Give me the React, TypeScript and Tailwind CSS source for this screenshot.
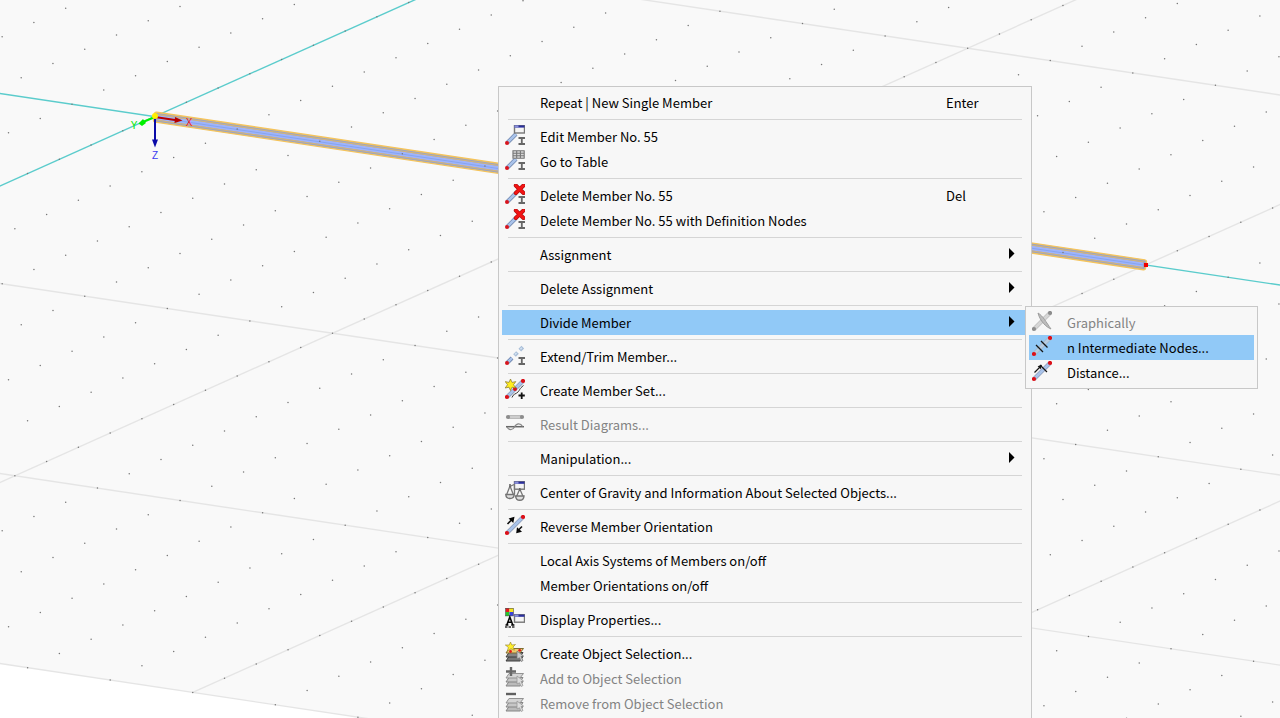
import type { ReactNode } from "react";
import clsx from "clsx";

/* ---------- icons (20px wide, drawn in a 23px tall box) ---------- */

function Icon({ children }: { children?: ReactNode }) {
  return (
    <svg viewBox="0 0 20 23" className="h-[23px] w-5 shrink-0" fill="none" aria-hidden="true">
      {children}
    </svg>
  );
}

function ShortRod() {
  return (
    <>
      <path d="M2 18 L11 9" stroke="#6f86ae" strokeWidth="4" />
      <path d="M2 18 L11 9" stroke="#a9c3ea" strokeWidth="2.6" />
      <circle cx="2" cy="18" r="2" fill="#d8141c" />
    </>
  );
}

function LongRod({ color = "#a9c3ea", edge = "#8b9cb8", node = "#dc1018" }) {
  return (
    <>
      <path d="M2 18 L18 2" stroke={edge} strokeWidth="4" />
      <path d="M2 18 L18 2" stroke={color} strokeWidth="2.6" />
      <circle cx="2" cy="18" r="2.1" fill={node} />
      <circle cx="18" cy="2" r="2.1" fill={node} />
    </>
  );
}

function Section() {
  return <path d="M13.5 13 H20 M13.5 19 H20 M16.8 13 V19" stroke="#666" strokeWidth="1.8" />;
}

function Dialog({ x = 9.5, y = 0.5 }) {
  return (
    <g>
      <rect x={x} y={y} width="10" height="7.5" fill="#f4f4f4" stroke="#777" strokeWidth="1.4" />
      <path d={`M${x} ${y + 1} h10`} stroke="#2a2f9c" strokeWidth="2.2" />
      <path d={`M${x} ${y + 1} h4`} stroke="#8a90d8" strokeWidth="2.2" />
    </g>
  );
}

const EditIcon = () => (
  <Icon>
    <ShortRod />
    <Dialog />
    <Section />
  </Icon>
);

const TableIcon = () => (
  <Icon>
    <ShortRod />
    <rect x="7.5" y="0.5" width="12" height="8" fill="#d8d8d8" />
    <path d="M7.5 .8 H19.5 M7.5 3.3 H19.5 M7.5 5.8 H19.5 M7.5 8.3 H19.5 M8 .5 V8.5 M11.7 .5 V8.5 M15.4 .5 V8.5 M19.2 .5 V8.5" stroke="#777" strokeWidth="1.1" />
    <Section />
  </Icon>
);

const DeleteIcon = () => (
  <Icon>
    <ShortRod />
    <path d="M10.8 1.5 L18.5 9 M18.5 1.5 L10.8 9" stroke="#a80d0d" strokeWidth="4" strokeLinecap="round" />
    <path d="M10.8 1.5 L18.5 9 M18.5 1.5 L10.8 9" stroke="#f31414" strokeWidth="2.8" strokeLinecap="round" />
    <Section />
  </Icon>
);

const ExtendIcon = () => (
  <Icon>
    <path d="M2 18 L7 13" stroke="#6f86ae" strokeWidth="4" />
    <path d="M2 18 L7 13" stroke="#a9c3ea" strokeWidth="2.4" />
    <path d="M9.5 10.5 L12.5 7.5 M14.8 5.2 L17.8 2.2" stroke="#aabfd8" strokeWidth="3.8" />
    <path d="M10 9.5 L11.5 8 M15.4 4.2 L16.9 2.7" stroke="#d3e2f3" strokeWidth="1.6" />
    <circle cx="2" cy="18" r="2" fill="#d8141c" />
    <Section />
  </Icon>
);

const MemberSetIcon = () => (
  <Icon>
    <LongRod />
    <circle cx="10" cy="10" r="2" fill="#dc1018" />
    <path d="M18.5 6.5 C14 10 15 11 13 13 C11 15 8 15 7 18.5" stroke="#333" />
    <path d="M5.5 0 L7 3.4 L10.8 2.6 L8.5 5.7 L10.8 9 L7 8.2 L5.5 11.5 L4 8.2 L.2 9 L2.5 5.7 L.2 2.6 L4 3.4 Z" fill="#ffed1e" stroke="#85762b" strokeWidth=".7" />
    <path d="M13.5 16.5 H19.8 M16.7 13.5 V20" stroke="#111" strokeWidth="1.8" />
  </Icon>
);

const ResultIcon = () => (
  <Icon>
    <path d="M3 4 H17" stroke="#aaa" strokeWidth="3.6" />
    <path d="M3 4 H17" stroke="#d2d2d2" strokeWidth="1.8" />
    <circle cx="3" cy="4" r="2.1" fill="#8d8d8d" />
    <circle cx="17" cy="4" r="2.1" fill="#8d8d8d" />
    <path d="M1 13.7 H19" stroke="#666" strokeWidth="1.5" />
    <path d="M2 14 C4 17.5 7.5 17.5 9.5 14 C11.5 10 15.5 9.8 17.5 13.5" stroke="#888" strokeWidth="1.3" />
  </Icon>
);

const GravityIcon = () => (
  <Icon>
    <path d="M5 5.5 L9 3.5 M9.5 3.5 V13.5 M5 5 L1.5 14 M5 5 L8.5 14 M14.8 8 L11.3 16 M14.8 8 L18.3 16" stroke="#777" strokeWidth="1.3" />
    <path d="M.8 13.5 H9.2 C9 17 7 17.5 5 17.5 S1 17 .8 13.5 Z M10.6 15 H19 C18.8 18.5 16.8 19.3 14.8 19.3 S10.8 18.5 10.6 15 Z" fill="#ddd" stroke="#737373" strokeWidth="1.4" />
    <Dialog x={9.5} y={0.7} />
    <path d="M5 3 V6 M14.8 7 V10" stroke="#666" strokeWidth="1.6" />
  </Icon>
);

const ReverseIcon = () => (
  <Icon>
    <LongRod />
    <path d="M2.5 9 L7 4.5 M17 11.5 L13 15.5" stroke="#111" strokeWidth="1.6" />
    <path d="M9.5 1.8 L8.3 8 L3.6 3.4 Z M11.2 18.2 L12 12.2 L17 16.8 Z" fill="#050505" />
  </Icon>
);

const DisplayIcon = () => (
  <Icon>
    <rect x="0.5" width="4" height="4" fill="#e51a1a" />
    <rect x="4.5" width="4" height="4" fill="#f5e51b" />
    <rect x="0.5" y="4" width="4" height="4" fill="#28c62a" />
    <rect x="4.5" y="4" width="4" height="4" fill="#3b43d9" />
    <rect x="0.5" y="0.3" width="8" height="7.6" stroke="#555" strokeWidth=".6" />
    <path d="M1.8 17 L4.8 9 L7.8 17 M2.8 14.3 H6.8 M.5 17 H3.4 M6.2 17 H9.4" stroke="#050505" strokeWidth="1.6" />
    <path d="M0 19 H10" stroke="#333" strokeWidth="1.6" strokeDasharray="2.5 1" />
    <Dialog x={9.5} y={6.7} />
  </Icon>
);

function Layers({ dim }: { dim?: boolean }) {
  const line = dim ? "#858585" : "#3d3d3d";
  return (
    <>
      <path d="M4 14.5 H18 L15 19 H1 Z" fill={dim ? "#bbb" : "#777"} stroke={line} />
      <path d="M4 10.5 H18 L15 15 H1 Z" fill={dim ? "#c6c6c6" : "#858585"} stroke={line} />
      <path d="M4 6.5 H18.5 L15 11 H1 Z" fill={dim ? "#d4d4d4" : "#efcc6f"} stroke={dim ? "#929292" : "#806c30"} />
      {!dim && (
        <>
          <circle cx="5.5" cy="9.5" r="1.4" fill="#e11b1b" />
          <circle cx="14.7" cy="8.3" r="1.4" fill="#e11b1b" />
        </>
      )}
      <path d="M12 9 L18.5 14 L16 14.5 L18 18.5 L16 19.5 L14.5 15.8 L12 17 Z" fill={dim ? "#ddd" : "#ccc"} stroke={dim ? "#999" : "#777"} strokeWidth=".8" />
    </>
  );
}

const CreateSelectionIcon = () => (
  <Icon>
    <Layers />
    <path d="M5.5 0 L6.8 3 L10.5 2.5 L8 5 L9.5 8.2 L6 6.7 L2.5 9 L3.3 5.3 L.3 3 L4.2 3 Z" fill="#fff02a" stroke="#95812c" strokeWidth=".6" />
  </Icon>
);

const AddSelectionIcon = () => (
  <Icon>
    <Layers dim />
    <path d="M1 4.5 H11 M6 0 V9" stroke="#686868" strokeWidth="2.4" />
  </Icon>
);

const RemoveSelectionIcon = () => (
  <Icon>
    <Layers dim />
    <path d="M1 2 H11" stroke="#606060" strokeWidth="2.4" />
  </Icon>
);

const GraphicallyIcon = () => (
  <Icon>
    <LongRod color="#d6d6d6" edge="#bdbdbd" node="#8d8d8d" />
    <path d="M6 2 C11 5 14 11 19 18 C14 16 8 10 6 2 Z" fill="#bdbdbd" stroke="#9e9e9e" />
  </Icon>
);

const NodesIcon = () => (
  <Icon>
    <LongRod color="#b7cde2" edge="#a5b4c4" />
    <path d="M4 9 L11 16 M9 5 L15.5 11.5" stroke="#151515" strokeWidth="1.3" />
  </Icon>
);

const DistanceIcon = () => (
  <Icon>
    <LongRod />
    <path d="M2.5 11.5 L9 5 M8 4 L15 11" stroke="#151515" strokeWidth="1.2" />
    <path d="M10 3.8 L8.7 8.3 L5.6 5.2 Z" fill="#151515" />
  </Icon>
);

/* ---------- menu ---------- */

type Item = {
  label: string;
  icon?: () => ReactNode;
  shortcut?: string;
  disabled?: boolean;
  active?: boolean;
  children?: Item[];
  arrow?: boolean;
};

const divideItems: Item[] = [
  { label: "Graphically", icon: GraphicallyIcon, disabled: true },
  { label: "n Intermediate Nodes...", icon: NodesIcon, active: true },
  { label: "Distance...", icon: DistanceIcon },
];

// one inner array per group, groups are split by a separator
const groups: Item[][] = [
  [{ label: "Repeat | New Single Member", shortcut: "Enter" }],
  [
    { label: "Edit Member No. 55", icon: EditIcon },
    { label: "Go to Table", icon: TableIcon },
  ],
  [
    { label: "Delete Member No. 55", icon: DeleteIcon, shortcut: "Del" },
    { label: "Delete Member No. 55 with Definition Nodes", icon: DeleteIcon },
  ],
  [{ label: "Assignment", arrow: true }],
  [{ label: "Delete Assignment", arrow: true }],
  [{ label: "Divide Member", arrow: true, active: true, children: divideItems }],
  [{ label: "Extend/Trim Member...", icon: ExtendIcon }],
  [{ label: "Create Member Set...", icon: MemberSetIcon }],
  [{ label: "Result Diagrams...", icon: ResultIcon, disabled: true }],
  [{ label: "Manipulation...", arrow: true }],
  [{ label: "Center of Gravity and Information About Selected Objects...", icon: GravityIcon }],
  [{ label: "Reverse Member Orientation", icon: ReverseIcon }],
  [{ label: "Local Axis Systems of Members on/off" }, { label: "Member Orientations on/off" }],
  [{ label: "Display Properties...", icon: DisplayIcon }],
  [
    { label: "Create Object Selection...", icon: CreateSelectionIcon },
    { label: "Add to Object Selection", icon: AddSelectionIcon, disabled: true },
    { label: "Remove from Object Selection", icon: RemoveSelectionIcon, disabled: true },
  ],
];

function MenuItem({ item }: { item: Item }) {
  const ItemIcon = item.icon ?? Icon;
  return (
    <li role="none" className="relative">
      <button
        type="button"
        role="menuitem"
        disabled={item.disabled}
        aria-haspopup={item.arrow ? "menu" : undefined}
        className={clsx(
          "flex h-[25px] w-full items-center gap-[15px] pl-[3px] text-left",
          item.active && "bg-[#91c9f7]",
          item.disabled ? "text-[#838383]" : "text-black"
        )}
      >
        <ItemIcon />
        <span className="flex-1 whitespace-nowrap">{item.label}</span>
        {item.shortcut && <span className="w-[82px]">{item.shortcut}</span>}
        {item.arrow && (
          <svg viewBox="0 0 6 13" className="mr-[13px] h-[13px] w-[6px]" aria-hidden="true">
            <path d="M0 0 L5.500 5.500 L0 11 Z" fill="#000" />
          </svg>
        )}
      </button>
      {item.children && (
        <ul role="menu" className="absolute -top-1 left-[523px] z-10 w-[233px] border border-[#c8c8c8] bg-[#f7f7f7] p-[3px]">
          {item.children.map((child) => (
            <MenuItem key={child.label} item={child} />
          ))}
        </ul>
      )}
    </li>
  );
}

function ContextMenu() {
  return (
    <div
      role="menu"
      className="absolute top-[86px] bottom-0 left-[498px] w-[534px] border border-b-0 border-[#c8c8c8] bg-[#f7f7f7] p-[3px]"
    >
      {groups.map((group, i) => (
        <div key={i}>
          {i > 0 && <div role="separator" className="mx-[6px] my-1 h-px bg-[#d5d5d5]" />}
          <ul role="none">
            {group.map((item) => (
              <MenuItem key={item.label} item={item} />
            ))}
          </ul>
        </div>
      ))}
    </div>
  );
}

/* ---------- work plane ---------- */

// screen position of a point on the work plane grid
const at = (a: number, b: number) => ({
  x: 154.6 + 82.58 * a + 31.76 * b,
  y: 116.6 + 12.36 * a - 14.25 * b,
});

function GridLine({ from, to, color = "#e5e5e5" }: { from: [number, number]; to: [number, number]; color?: string }) {
  const p = at(...from);
  const q = at(...to);
  return <line x1={p.x} y1={p.y} x2={q.x} y2={q.y} stroke={color} strokeWidth="1.4" />;
}

const dots: { x: number; y: number }[] = [];
for (let a = -6; a <= 30; a++) {
  for (let b = -30; b <= 30; b++) {
    const p = at(a, b);
    if (p.x > -2 && p.x < 1282 && p.y > -2 && p.y < 720) dots.push(p);
  }
}

function Viewport() {
  const plane = [at(-20, -30), at(30, -30), at(30, 40), at(-20, 40)];
  return (
    <svg viewBox="0 0 1280 718" preserveAspectRatio="xMinYMin slice" className="absolute inset-0 h-full w-full" aria-hidden="true">
      <polygon points={plane.map((p) => `${p.x},${p.y}`).join(" ")} fill="#f9f9f9" />

      {[-30, -20, -10, 10].map((b) => (
        <GridLine key={b} from={[-20, b]} to={[30, b]} />
      ))}
      {[6, 12, 18].map((a) => (
        <GridLine key={a} from={[a, -30]} to={[a, 40]} />
      ))}
      <GridLine from={[-10, 0]} to={[20, 0]} color="#5bcccc" />
      <GridLine from={[0, -20]} to={[0, 20]} color="#5bcccc" />

      {/* selected member */}
      <g transform="translate(155 117) rotate(8.5)">
        <rect x="-1" y="-5" width="1003" height="10" rx="2" fill="#9da5be" stroke="#f5c45c" strokeWidth="1.4" />
        <rect x="2" y="-2.3" width="997" height="4.6" fill="#9fb4fb" />
        <path d="M2 -2.8 H999 M2 2.8 H999" stroke="#d6b577" strokeWidth=".9" />
        <path d="M2 .2 H999" stroke="#7fa2f0" strokeWidth=".8" />
      </g>

      {dots.map((p, i) => (
        <circle key={i} cx={p.x} cy={p.y} r=".75" fill="#777" />
      ))}

      {/* end node */}
      <rect x="1144" y="263" width="4" height="4" fill="#f00000" />

      {/* origin axes */}
      <path d="M155 117 L175 120" stroke="#b80000" strokeWidth="2" />
      <path d="M175 117 L182.500 120.500 L174.500 123 Z" fill="#b80000" />
      <path d="M155 117 L143 122" stroke="#00f000" strokeWidth="2" />
      <path d="M138.500 123.500 L143 119 L146 123 L142 126 Z" fill="#00f000" />
      <path d="M155 117 V141" stroke="#0a0aa8" strokeWidth="2" />
      <path d="M152 139.500 H158 L155 147.500 Z" fill="#0a0aa8" />
      <circle cx="155" cy="116" r="3" fill="#ffee00" />
      <g className="font-['Liberation_Sans'] text-[10px]" textAnchor="middle">
        <text x="189" y="126" fill="#f01818">X</text>
        <text x="134" y="129" fill="#00e800">Y</text>
        <text x="155" y="159" fill="#3b3bf0">Z</text>
      </g>
    </svg>
  );
}

export default function App() {
  return (
    <main className="relative h-screen overflow-hidden bg-white font-['Noto_Sans_CJK_KR',sans-serif] text-[13px] leading-[25px]">
      <Viewport />
      <ContextMenu />
    </main>
  );
}
